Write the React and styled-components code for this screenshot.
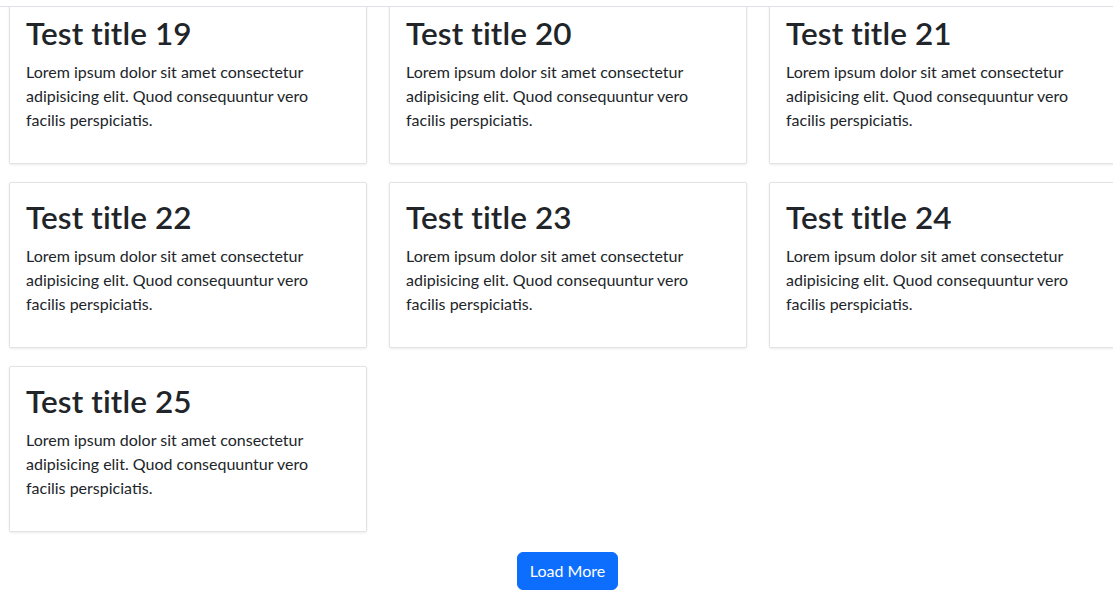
import React from "react";
import styled, { createGlobalStyle } from "styled-components";

const GlobalStyle = createGlobalStyle`
  html, body {
    margin: 0;
    padding: 0;
    overflow: hidden;
    background: #fff;
  }
  body {
    font-family: Lato, "Noto Sans", "Liberation Sans", sans-serif;
    color: #212529;
  }
`;

const TopBar = styled.div`
  position: fixed;
  top: 0;
  left: 0;
  right: 0;
  height: 6px;
  background: #fff;
  border-bottom: 1px solid #dee2e6;
  z-index: 10;
`;

const Page = styled.div`
  width: 1135px;
  margin-top: -2px;
  display: flex;
  flex-direction: column;
  align-items: center;
`;

const Grid = styled.div`
  align-self: stretch;
  display: grid;
  grid-template-columns: repeat(3, 358px);
  column-gap: 22px;
  row-gap: 18px;
  padding-left: 9px;
`;

const Card = styled.div`
  border: 1px solid #e3e3e3;
  border-radius: 2px;
  box-shadow: 0 1px 3px rgba(0, 0, 0, 0.08);
  padding: 16px 16px 15px;
  background: #fff;
`;

const Title = styled.h2`
  margin: 0 0 9px;
  font-size: 31.5px;
  font-weight: 600;
  line-height: 36px;
  letter-spacing: 0.1px;
`;

const Text = styled.p`
  margin: 0 0 16px;
  font-size: 16px;
  line-height: 24px;
`;

const LoadButton = styled.button`
  margin-top: 20px;
  padding: 6px 12px;
  font-family: inherit;
  font-size: 16px;
  line-height: 24px;
  color: #fff;
  background: #0d6efd;
  border: 1px solid #0d6efd;
  border-radius: 6px;
  cursor: pointer;
`;

const items = [19, 20, 21, 22, 23, 24, 25];

export default function App() {
  return (
    <>
      <GlobalStyle />
      <TopBar />
      <Page>
        <Grid>
          {items.map((n) => (
            <Card key={n}>
              <Title>Test title {n}</Title>
              <Text>
                Lorem ipsum dolor sit amet consectetur adipisicing elit. Quod
                consequuntur vero facilis perspiciatis.
              </Text>
            </Card>
          ))}
        </Grid>
        <LoadButton>Load More</LoadButton>
      </Page>
    </>
  );
}
